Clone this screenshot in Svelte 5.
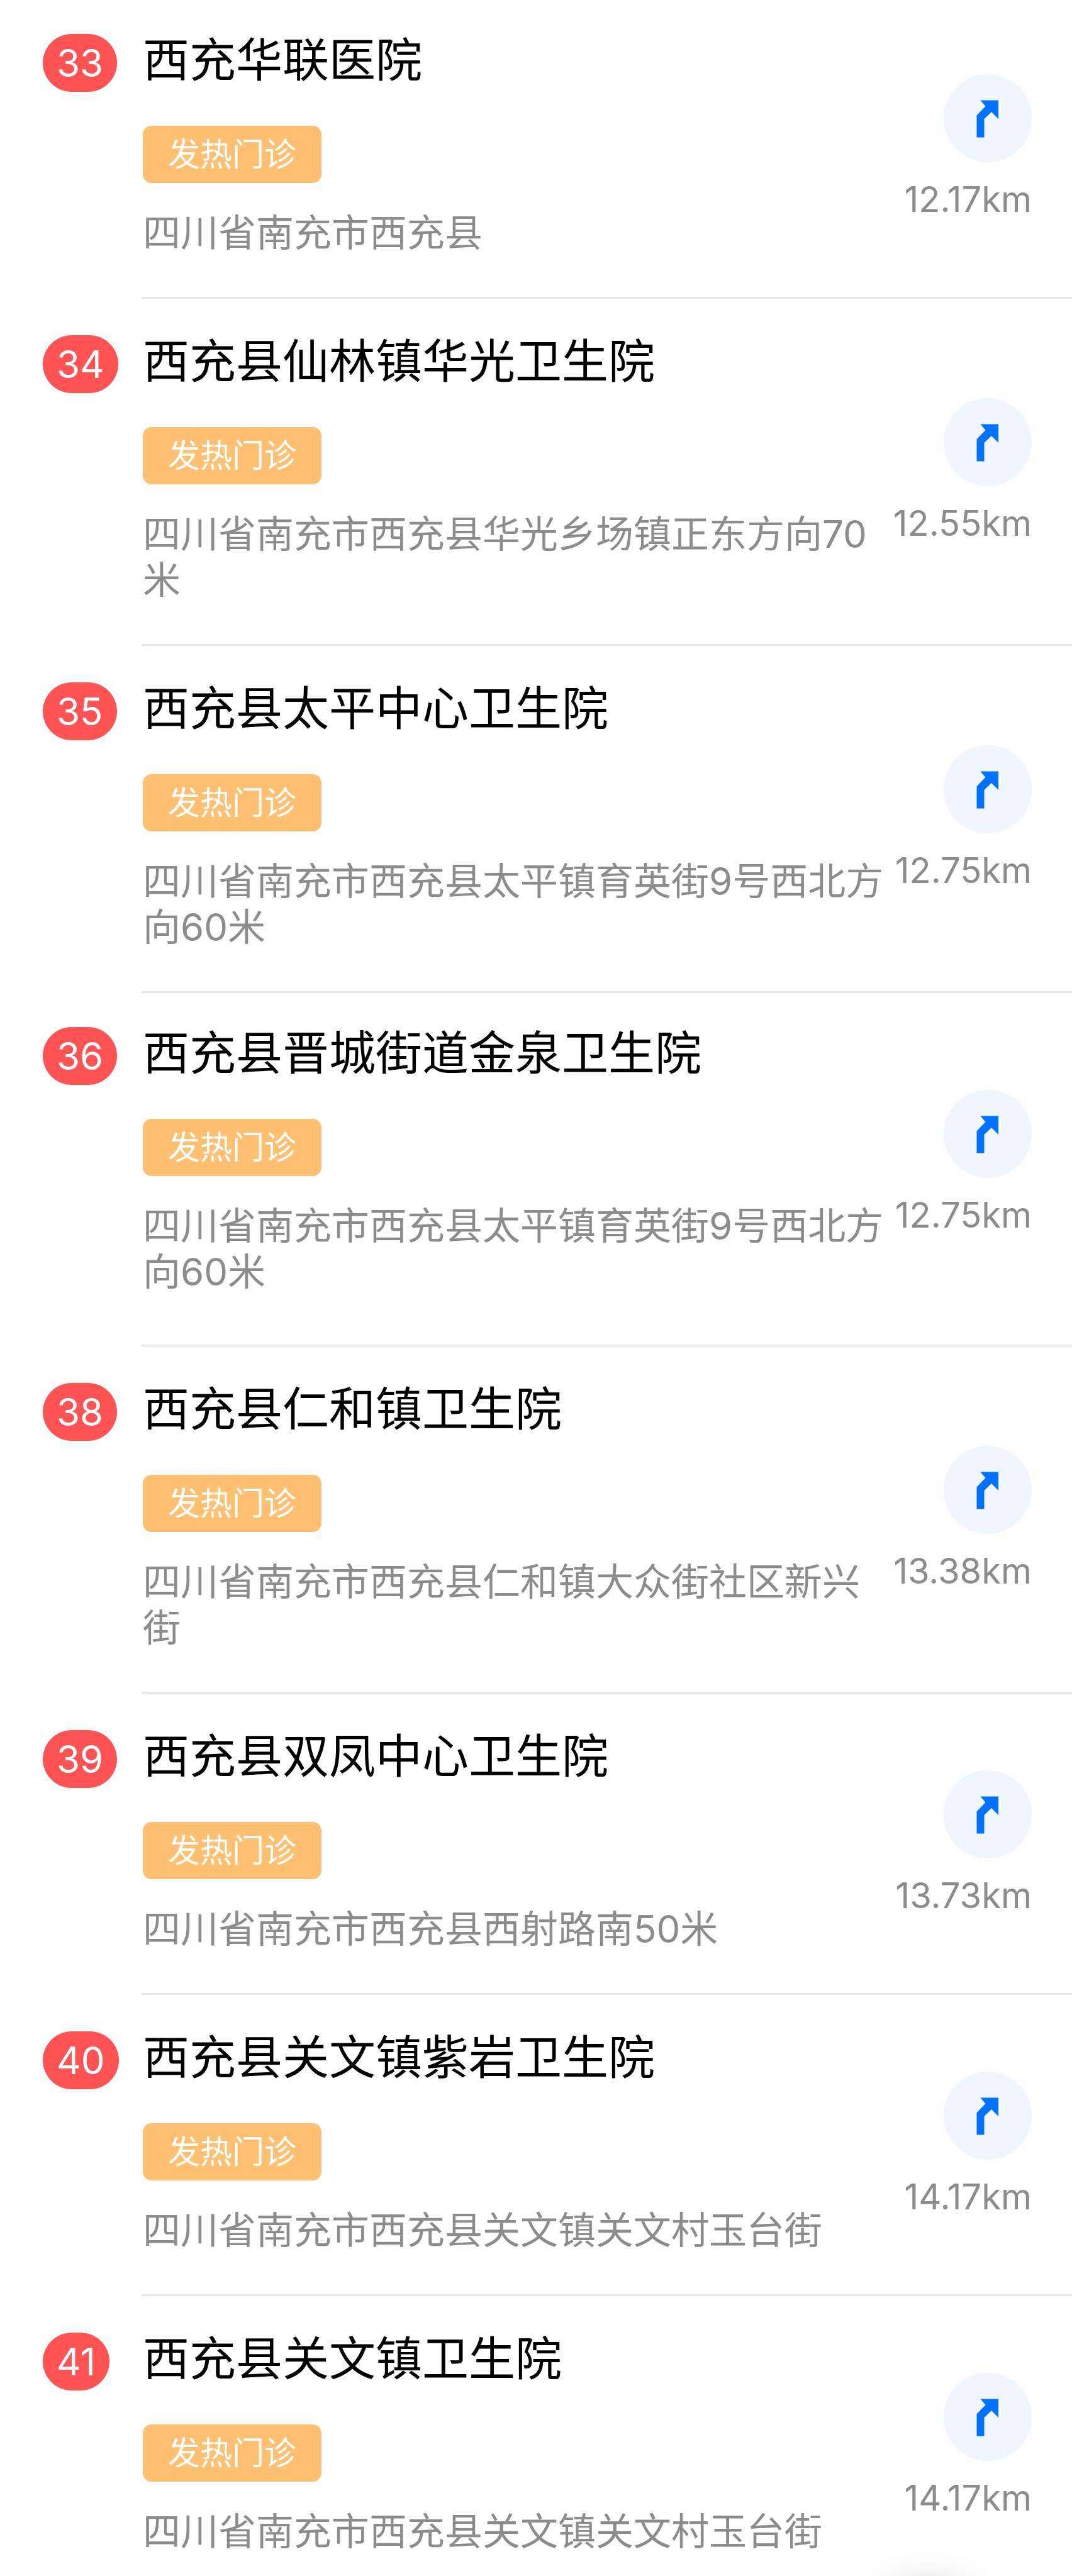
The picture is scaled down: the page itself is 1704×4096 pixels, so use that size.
<script lang="ts">
  type Clinic = {
    rank: number
    name: string
    address: string
    distance: string
    first?: boolean
    spaced?: boolean
  }

  const tag = '发热门诊'

  const clinics: Clinic[] = [
    { rank: 33, name: '西充华联医院', address: '四川省南充市西充县', distance: '12.17km', first: true },
    { rank: 34, name: '西充县仙林镇华光卫生院', address: '四川省南充市西充县华光乡场镇正东方向70米', distance: '12.55km' },
    { rank: 35, name: '西充县太平中心卫生院', address: '四川省南充市西充县太平镇育英街9号西北方向60米', distance: '12.75km' },
    { rank: 36, name: '西充县晋城街道金泉卫生院', address: '四川省南充市西充县太平镇育英街9号西北方向60米', distance: '12.75km', first: true, spaced: true },
    { rank: 38, name: '西充县仁和镇卫生院', address: '四川省南充市西充县仁和镇大众街社区新兴街', distance: '13.38km' },
    { rank: 39, name: '西充县双凤中心卫生院', address: '四川省南充市西充县西射路南50米', distance: '13.73km' },
    { rank: 40, name: '西充县关文镇紫岩卫生院', address: '四川省南充市西充县关文镇关文村玉台街', distance: '14.17km' },
    { rank: 41, name: '西充县关文镇卫生院', address: '四川省南充市西充县关文镇关文村玉台街', distance: '14.17km' }
  ]
</script>

<main class="page" lang="zh-CN">
  <ul class="list">
    {#each clinics as clinic (clinic.rank)}
      <li class="row" class:row--first={clinic.first} class:row--spaced={clinic.spaced}>
        <div class="row__rank">
          <span class="badge">{clinic.rank}</span>
        </div>
        <div class="row__body">
          <div class="info">
            <h2>{clinic.name}</h2>
            <span class="tag">{tag}</span>
            <p>{clinic.address}</p>
          </div>
          <div class="nav">
            <button class="nav__button" type="button" aria-label={clinic.name}>
              <svg viewBox="0 0 140 140" aria-hidden="true">
                <path d="M58.5 41.5H87V71L76 60L64.5 71V100.5H52.5V65.5L66.5 51Z" fill="#0072ff" />
              </svg>
            </button>
            <span class="nav__distance">{clinic.distance}</span>
          </div>
        </div>
      </li>
    {/each}
  </ul>
  <div class="float" aria-hidden="true"></div>
</main>

<style>
  :global(body) {
    background: #fefefe;
  }
  .page {
    height: 100vh;
    overflow: hidden;
    position: relative;
    font-family: Inter, 'Noto Sans CJK SC', sans-serif;
  }
  .list {
    list-style: none;
    margin: 0;
    padding: 0;
  }
  .row {
    --row-top: 58px;
    --row-bottom: 65px;
    display: flex;
    padding-left: 68px;
  }
  .row--first {
    --row-top: 54px;
  }
  .row__rank {
    flex: 0 0 157px;
    padding-top: var(--row-top);
  }
  .badge {
    display: inline-block;
    padding: 0 22px;
    border-radius: 46px;
    background: #ff5252;
    color: #fff;
    font-size: 60px;
    line-height: 92px;
  }
  .row__body {
    flex: 1;
    min-width: 0;
    display: flex;
    align-items: center;
    padding: var(--row-top) 64px var(--row-bottom) 2px;
    border-bottom: 3px solid #e5e5e5;
  }
  .row--spaced .row__body {
    padding-bottom: calc(var(--row-bottom) + 14px);
  }
  .info {
    flex: 1;
    min-width: 0;
    display: flex;
    flex-direction: column;
    align-items: flex-start;
  }
  h2 {
    margin: 0 0 64px;
    color: #000;
    font-size: 74px;
    font-weight: 400;
    line-height: 82px;
  }
  .tag {
    padding: 0 40px;
    border-radius: 14px;
    background: #ffc171;
    color: #fff;
    font-size: 51px;
    line-height: 91px;
  }
  p {
    margin: 43px 0 0;
    color: #8c8c8c;
    font-size: 60px;
    line-height: 73px;
  }
  .nav {
    flex: 0 0 222px;
    display: flex;
    flex-direction: column;
    align-items: flex-end;
    gap: 27px;
    padding-top: 6px;
  }
  .nav__button {
    width: 140px;
    height: 140px;
    padding: 0;
    border: none;
    border-radius: 50%;
    background: #eff6ff;
    cursor: pointer;
  }
  .nav__button svg {
    display: block;
    width: 100%;
    height: 100%;
  }
  .nav__distance {
    color: #8a8c8e;
    font-size: 56px;
    line-height: 65px;
    white-space: nowrap;
  }
  .float {
    position: absolute;
    right: 128px;
    bottom: -206px;
    width: 200px;
    height: 200px;
    border-radius: 50%;
    background: #fff;
    box-shadow: 0 0 48px rgba(0, 0, 0, 0.14);
  }
</style>
